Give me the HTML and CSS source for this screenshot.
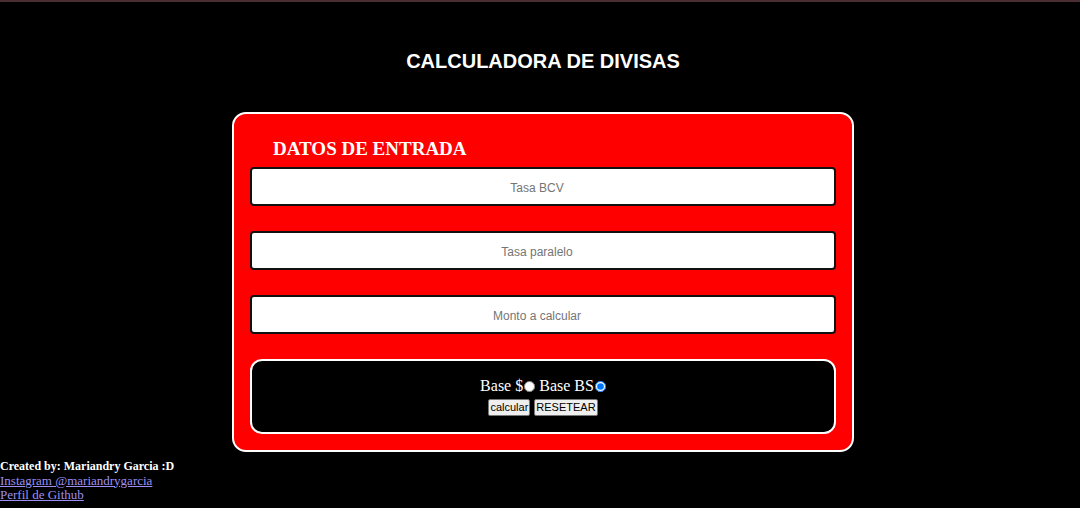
FILE: index.html
```html
<!DOCTYPE html>
<html lang="es">
<head>
<meta charset="utf-8">
<title>Calculadora de divisas</title>
<link rel="stylesheet" href="styles.css">
</head>
<body>
<main class="page">
  <h1 class="title">CALCULADORA DE DIVISAS</h1>
  <section class="card">
    <h2 class="card-title">DATOS DE ENTRADA</h2>
    <input class="field" type="text" placeholder="Tasa BCV">
    <input class="field" type="text" placeholder="Tasa paralelo">
    <input class="field" type="text" placeholder="Monto a calcular">
    <div class="options">
      <div class="radios">
        <label>Base $<input class="radio" type="radio" name="base"></label>
        <label>Base BS<input class="radio" type="radio" name="base" checked></label>
      </div>
      <div class="buttons">
        <button class="btn">calcular</button>
        <button class="btn">RESETEAR</button>
      </div>
    </div>
  </section>
</main>
<footer class="footer">
  <div class="credit">Created by: Mariandry Garcia :D</div>
  <a class="link" href="#">Instagram @mariandrygarcia</a><br>
  <a class="link" href="#">Perfil de Github</a>
</footer>
</body>
</html>
```
FILE: styles.css
```css
html, body {
  margin: 0;
  padding: 0;
  background: #000;
}
body {
  border-top: 2px solid #4a2c33;
  font-family: "Liberation Serif", "Times New Roman", serif;
  color: #fff;
  height: 506px;
  overflow: hidden;
}
.page {
  padding-left: 6px;
}
.title {
  margin: 48px 0 39px;
  font-family: "Liberation Sans", Arial, sans-serif;
  font-size: 20px;
  line-height: 23px;
  font-weight: bold;
  text-align: center;
  color: #fff;
}
.card {
  width: 586px;
  margin: 0 auto;
  background: #ff0000;
  border: 2px solid #fff;
  border-radius: 14px;
  padding: 23px 16px 16px;
  display: flex;
  flex-direction: column;
  gap: 25px;
}
.card-title {
  margin: 0 0 -18px;
  padding-left: 23px;
  font-family: "Liberation Serif", "Times New Roman", serif;
  font-size: 19px;
  line-height: 23px;
  font-weight: bold;
  color: #fff;
}
.field {
  box-sizing: border-box;
  width: 586px;
  height: 39px;
  margin: 0;
  padding: 3px 14px 0 2px;
  border: 2px solid #111;
  border-radius: 4px;
  background: #fff;
  font-family: "Liberation Sans", Arial, sans-serif;
  font-size: 12px;
  text-align: center;
  outline: none;
}
.field::placeholder {
  color: #757575;
}
.options {
  box-sizing: border-box;
  height: 75px;
  background: #000;
  border: 2px solid #fff;
  border-radius: 12px;
  padding-top: 16px;
  display: flex;
  flex-direction: column;
  align-items: center;
}
.radios {
  font-size: 16px;
  line-height: 18px;
  display: flex;
  gap: 4px;
}
.radios label {
  display: flex;
  align-items: center;
}
.radio {
  width: 11px;
  height: 11px;
  margin: 0 0 0 1px;
}
.buttons {
  margin-top: 4px;
  display: flex;
  gap: 4px;
}
.btn {
  font-family: "Liberation Sans", Arial, sans-serif;
  font-size: 11px;
  line-height: 13px;
  padding: 1px 1px;
  margin: 0;
  background: #efefef;
  border: 1px solid #767676;
  border-radius: 2px;
  color: #000;
}
.footer {
  margin-top: 7px;
  font-size: 13px;
  line-height: 14.5px;
}
.credit {
  font-weight: bold;
  font-size: 12px;
}
.link {
  color: #9d8ff2;
}
```
